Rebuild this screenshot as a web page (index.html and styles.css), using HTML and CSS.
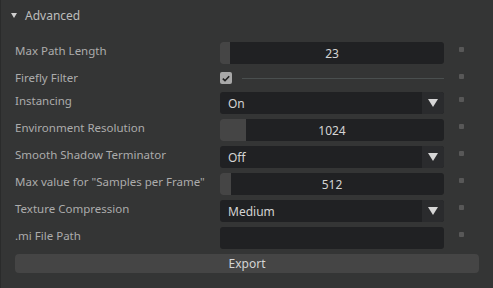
FILE: index.html
```html
<!DOCTYPE html>
<html lang="en">
<head>
    <meta charset="UTF-8">
    <title>Advanced</title>
    <link rel="stylesheet" href="styles.css">
</head>
<body>
    <div class="panel">
        <div class="header">
            <span class="caret"></span>
            <span class="title">Advanced</span>
        </div>
        <div class="rows">
            <div class="row">
                <div class="label">Max Path Length</div>
                <div class="field slider"><span class="fill" style="width: 10px"></span><span class="value">23</span></div>
                <span class="dot"></span>
            </div>
            <div class="row short">
                <div class="label">Firefly Filter</div>
                <div class="check-wrap">
                    <span class="checkbox">
                        <svg width="8" height="7" viewBox="0 0 8 7"><path d="M0.8 3.6 L3 5.7 L7.2 1.2" fill="none" stroke="#202020" stroke-width="1.6"/></svg>
                    </span>
                    <span class="rule"></span>
                </div>
                <span class="dot"></span>
            </div>
            <div class="row">
                <div class="label">Instancing</div>
                <div class="field combo"><span class="text">On</span><span class="arrow"></span></div>
                <span class="dot"></span>
            </div>
            <div class="row">
                <div class="label">Environment Resolution</div>
                <div class="field slider"><span class="fill" style="width: 26px"></span><span class="value">1024</span></div>
                <span class="dot"></span>
            </div>
            <div class="row">
                <div class="label">Smooth Shadow Terminator</div>
                <div class="field combo"><span class="text">Off</span><span class="arrow"></span></div>
                <span class="dot"></span>
            </div>
            <div class="row">
                <div class="label">Max value for "Samples per Frame"</div>
                <div class="field slider"><span class="fill" style="width: 11px"></span><span class="value">512</span></div>
                <span class="dot"></span>
            </div>
            <div class="row">
                <div class="label">Texture Compression</div>
                <div class="field combo"><span class="text">Medium</span><span class="arrow"></span></div>
                <span class="dot"></span>
            </div>
            <div class="row">
                <div class="label">.mi File Path</div>
                <div class="field"></div>
                <span class="dot"></span>
            </div>
        </div>
        <button class="export">Export</button>
    </div>
</body>
</html>
```

FILE: styles.css
```css
body {
    margin: 0;
    background-color: #343535;
    font-family: 'Noto Sans', sans-serif;
    font-size: 11.5px;
}

.panel {
    width: 492px;
    height: 288px;
    border-left: 1px solid #2a2b2b;
    background-color: #343535;
}

.header {
    display: flex;
    align-items: center;
    height: 30px;
    padding-left: 10px;
}

.caret {
    width: 0;
    height: 0;
    border-left: 3px solid transparent;
    border-right: 3px solid transparent;
    border-top: 5px solid #cfcfcf;
    margin-right: 8px;
}

.title {
    color: #bdbdbd;
    font-size: 12px;
}

.rows {
    display: flex;
    flex-direction: column;
    gap: 5px;
    padding: 12px 0 0 14px;
}

.row {
    display: grid;
    grid-template-columns: 205px 224px 5px;
    height: 22px;
}

.row.short {
    height: 18px;
}

.label {
    color: #acacac;
    line-height: 16px;
    padding-top: 1px;
    white-space: nowrap;
}

.field {
    position: relative;
    display: flex;
    align-items: center;
    height: 22px;
    background-color: #202123;
    border-radius: 3px;
    overflow: hidden;
}

.slider .fill {
    align-self: stretch;
    background-color: #454545;
}

.slider .value {
    position: absolute;
    left: 0;
    right: 0;
    text-align: center;
    color: #d4d4d4;
    font-size: 12px;
}

.combo .text {
    flex: 1;
    padding-left: 8px;
    color: #d4d4d4;
    font-size: 12px;
}

.combo .arrow {
    position: relative;
    align-self: stretch;
    width: 22px;
    background-color: #2a2b2d;
}

.combo .arrow::after {
    content: "";
    position: absolute;
    left: 6px;
    top: 7px;
    border-left: 5px solid transparent;
    border-right: 5px solid transparent;
    border-top: 8px solid #d6d6d6;
}

.check-wrap {
    display: flex;
    align-items: center;
}

.checkbox {
    display: flex;
    align-items: center;
    justify-content: center;
    width: 12px;
    height: 12px;
    border-radius: 2px;
    background-color: #a8a8a8;
}

.rule {
    flex: 1;
    height: 1px;
    margin-left: 10px;
    background-color: #4a4f4f;
}

.dot {
    width: 5px;
    height: 5px;
    margin: 5px 0 0 15px;
    border-radius: 1px;
    background-color: #585858;
}

.export {
    display: block;
    width: 464px;
    height: 19px;
    margin: 5px 0 0 14px;
    padding: 0;
    border: none;
    border-radius: 4px;
    background-color: #454545;
    color: #d4d4d4;
    font-family: 'Noto Sans', sans-serif;
    font-size: 12px;
}
```
